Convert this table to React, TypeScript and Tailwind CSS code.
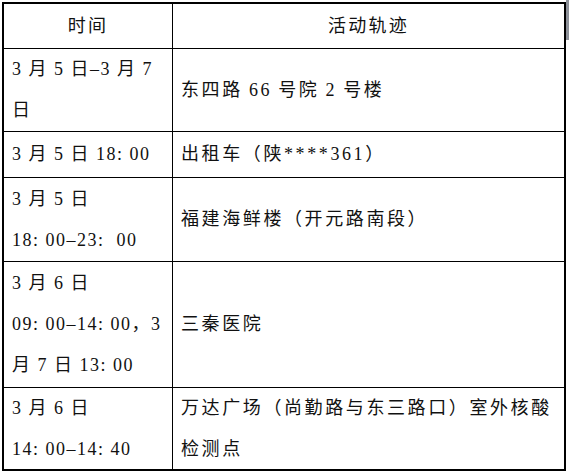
import React from 'react';

type Row = {
  time: string[];
  place: string[];
  h: string;
};

const rows: Row[] = [
  { time: ['3 月 5 日–3 月 7', '日'], place: ['东四路 66 号院 2 号楼'], h: 'h-[83px]' },
  { time: ['3 月 5 日 18: 00'], place: ['出租车（陕****361）'], h: 'h-[46px]' },
  { time: ['3 月 5 日', '18: 00–23:  00'], place: ['福建海鲜楼（开元路南段）'], h: 'h-[84px]' },
  { time: ['3 月 6 日', '09: 00–14: 00，3', '月 7 日 13: 00'], place: ['三秦医院'], h: 'h-[126px]' },
  { time: ['3 月 6 日', '14: 00–14: 40'], place: ['万达广场（尚勤路与东三路口）室外核酸', '检测点'], h: 'h-[81px]' },
];

const font = "font-['Liberation_Serif','Noto_Sans_CJK_SC',serif]";

const App = () => {
  return (
    <div className={`relative w-[569px] h-[474px] bg-white text-[#111] ${font} text-[18px]`}>
      {/* scrollbar sliver at the right edge */}
      <div className="absolute right-0 top-0 w-[3px] h-[40px] bg-[#8d9199]" />

      <div className="pt-[2px] pl-[2px]">
        <div className="grid w-fit grid-cols-[169px_391px] border-2 border-black">
          {/* Header */}
          <div className="h-[45px] border-r border-b border-black flex items-center justify-center leading-[41px] tracking-[2.3px]">
            时间
          </div>
          <div className="h-[45px] border-b border-black flex items-center justify-center leading-[41px] tracking-[2.3px]">
            活动轨迹
          </div>

          {rows.map((row, i) => {
            const last = i === rows.length - 1;
            return (
              <React.Fragment key={i}>
                <div
                  className={`${row.h} border-r border-black ${last ? '' : 'border-b'} flex flex-col justify-center pl-2 leading-[41px] tracking-[1.5px] whitespace-pre`}
                >
                  {row.time.map((t, j) => (
                    <div key={j}>{t}</div>
                  ))}
                </div>
                <div
                  className={`${row.h} border-black ${last ? '' : 'border-b'} flex flex-col justify-center pl-2 leading-[41px] tracking-[2.6px] [word-spacing:-1px] whitespace-pre`}
                >
                  {row.place.map((p, j) => (
                    <div key={j}>{p}</div>
                  ))}
                </div>
              </React.Fragment>
            );
          })}
        </div>
      </div>
    </div>
  );
};

export default App;
